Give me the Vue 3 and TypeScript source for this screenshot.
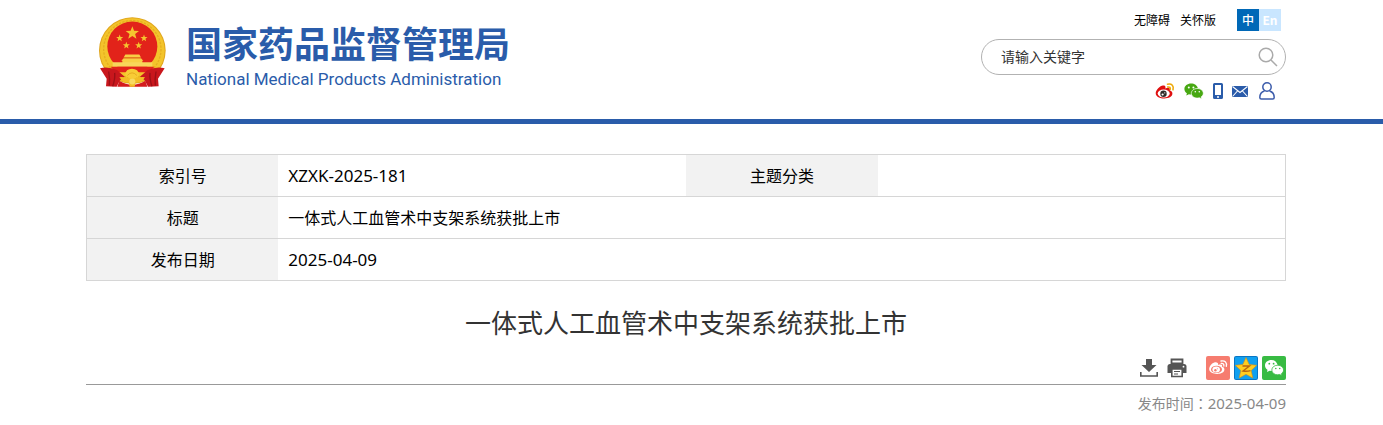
<script setup lang="ts">
import { ref } from 'vue'

interface Star { x: number; y: number; r: number }

const keyword = ref('')
const title = '一体式人工血管术中支架系统获批上市'
const published = '2025-04-09'

const stars: Star[] = [
  { x: 127, y: 73, r: 21 },
  { x: 89, y: 88, r: 11 },
  { x: 162, y: 88, r: 11 },
  { x: 109, y: 110, r: 11 },
  { x: 146, y: 110, r: 11 },
]

function starPoints({ x, y, r }: Star): string {
  return Array.from({ length: 10 }, (_, i) => {
    const radius = i % 2 ? r * 0.42 : r
    const angle = (Math.PI / 5) * i - Math.PI / 2
    return `${(x + radius * Math.cos(angle)).toFixed(1)},${(y + radius * Math.sin(angle)).toFixed(1)}`
  }).join(' ')
}
</script>

<template>
  <div class="page">
    <header class="header">
      <div class="container header-inner">
        <a class="brand" href="#">
          <svg class="emblem" viewBox="27 23 201 213" aria-hidden="true">
            <circle cx="127" cy="125" r="100" fill="#e0a51c" />
            <circle cx="127" cy="125" r="97" fill="#f3c42b" />
            <circle cx="127" cy="121" r="86" fill="none" stroke="#e6ae20" stroke-width="4" stroke-dasharray="7 4" />
            <circle cx="127" cy="113" r="75" fill="#e2231a" />
            <polygon v-for="star in stars" :key="`${star.x}-${star.y}`" :points="starPoints(star)" fill="#f5c52f" />
            <path d="M106 137h42l5 9H101z M101 148h52l7 8H94z M97 156h60v7H97z" fill="#f8cf45" />
            <path d="M68 160h119v14H68z" fill="#f8d65a" />
            <path d="M101 147h52" stroke="#d8850f" stroke-width="2" />
            <path d="M62 174h131l-14 16H77z" fill="#e2231a" />
            <path d="M30 178Q56 172 82 184L104 204 90 214 80 234 48 232 50 210Z" fill="#c9171d" />
            <path d="M224 178Q198 172 172 184L150 204 164 214 174 234 206 232 204 210Z" fill="#c9171d" />
            <path d="M56 188Q60 210 58 230M74 192Q76 210 68 232M198 188Q194 210 196 230M180 192Q178 210 186 232" fill="none" stroke="#9b1016" stroke-width="4" />
            <path d="M88 216Q127 240 166 216L172 234H82Z" fill="#d41c1d" />
            <path d="M105 198Q107 180 126 180T148 198Q140 210 127 210T105 198Z" fill="#f8cc35" />
            <path d="M112 200Q126 184 141 200" fill="none" stroke="#e09a18" stroke-width="2" />
            <path d="M88 205Q108 202 127 216 145 202 165 205L153 221 137 220 134 234H119L116 220 101 221Z" fill="#f3bd27" />
            <circle cx="127" cy="218" r="9" fill="#f9da62" />
          </svg>
          <span class="brand-text">
            <span class="brand-cn">国家药品监督管理局</span>
            <span class="brand-en">National Medical Products Administration</span>
          </span>
        </a>

        <div class="tools">
          <nav class="top-links">
            <a href="#">无障碍</a>
            <a href="#">关怀版</a>
            <span class="languages"><a class="lang current" href="#">中</a><a class="lang" href="#">En</a></span>
          </nav>

          <form class="search" @submit.prevent>
            <input v-model="keyword" class="search-input" type="text" placeholder="请输入关键字" aria-label="请输入关键字" />
            <button class="search-button" type="submit" aria-label="搜索">
              <svg viewBox="0 0 20 20" width="20" height="20" fill="none" stroke="#aaa" stroke-width="1.5">
                <circle cx="8" cy="8" r="6.8" /><path d="M13 13l6 6" />
              </svg>
            </button>
          </form>

          <nav class="channels">
            <a href="#" aria-label="微博">
              <svg viewBox="0 0 20 18" width="20" height="18">
                <path d="M8 3.5C5 3.6.7 8 .7 11.2c0 6.8 16.7 7.2 16.7.4 0-1.800-1.200-2.700-2.600-3 .8-2.700-1.200-3.400-4.500-2.100C10.900 4.300 10 3.300 8 3.500Z" fill="#df1010" />
                <ellipse cx="8.700" cy="11.500" rx="6" ry="4" fill="#fff" />
                <circle cx="8.500" cy="11.700" r="3.200" fill="#302b29" /><circle cx="7.600" cy="12.500" r="1.100" fill="#fff" /><circle cx="9.800" cy="10.800" r=".6" fill="#fff" />
                <path d="M12.500 2.200c4.500-1 6.500 1.800 5.500 5.500M12.700 5c2-.3 2.900.6 2.500 2.300" fill="none" stroke="#eeaa0b" stroke-width="1.600" stroke-linecap="round" />
              </svg>
            </a>
            <a href="#" aria-label="微信">
              <svg viewBox="0 0 20 18" width="20" height="18">
                <path d="M7.200 1.500C3.300 1.500.4 3.900.4 7c0 1.800 1 3.300 2.500 4.300L2.300 13.500l2.600-1.300c.8.2 1.600.3 2.500.3L13.800 6C13.200 3.400 10.500 1.500 7.200 1.500Z" fill="#47a812" />
                <path d="M13.300 6.500c-3.400 0-6 2.100-6 4.800s2.600 4.800 6 4.800c.8 0 1.500-.1 2.100-.3l2.300 1.100-.5-2c1.300-.9 2.100-2.100 2.100-3.600 0-2.700-2.600-4.800-6-4.800Z" fill="#47a812" stroke="#fff" stroke-width=".7" />
                <circle cx="4.800" cy="5.400" r="1" fill="#fff" /><circle cx="9.400" cy="5.400" r="1" fill="#fff" /><circle cx="11.300" cy="9.800" r=".8" fill="#fff" /><circle cx="15.300" cy="9.800" r=".8" fill="#fff" />
              </svg>
            </a>
            <a href="#" aria-label="手机版">
              <svg viewBox="0 0 10 18" width="10" height="18">
                <path fill-rule="evenodd" d="M1.500 1h7Q10 1 10 2.500v13Q10 17 8.500 17h-7Q0 17 0 15.500v-13Q0 1 1.500 1ZM2 3v10h6V3ZM4 14.200v1.500h2v-1.500Z" fill="#2a5caa" />
              </svg>
            </a>
            <a href="#" aria-label="邮箱">
              <svg viewBox="0 0 16 18" width="16" height="18">
                <path d="M0 4h16v11H0Z" fill="#2a5caa" />
                <path d="M.5 4.500L8 10.500l7.500-6M.5 14.500l5-5.500M15.500 14.500l-5-5.500" fill="none" stroke="#fff" stroke-width="1.100" />
              </svg>
            </a>
            <a class="account" href="#" aria-label="个人中心">
              <svg viewBox="0 0 16 18" width="16" height="18" fill="none" stroke="#3c5cab" stroke-width="1.500">
                <circle cx="8" cy="5" r="4.200" /><path d="M5.500 9C2.200 10 .8 12.500.8 15.500q0 1.500 1.500 1.500h11.400q1.500 0 1.500-1.500c0-3-1.400-5.500-4.700-6.500" />
              </svg>
            </a>
          </nav>
        </div>
      </div>
    </header>

    <main class="container">
      <table class="info">
        <tbody>
          <tr>
            <th scope="row">索引号</th>
            <td class="latin">XZXK-2025-181</td>
            <th scope="row">主题分类</th>
            <td></td>
          </tr>
          <tr>
            <th scope="row">标题</th>
            <td colspan="3">{{ title }}</td>
          </tr>
          <tr>
            <th scope="row">发布日期</th>
            <td class="latin" colspan="3">{{ published }}</td>
          </tr>
        </tbody>
      </table>

      <article>
        <h1 class="title">{{ title }}</h1>
        <div class="actions">
          <div class="file-actions">
            <button type="button" aria-label="下载">
              <svg viewBox="0 0 20 20" width="20" height="20" fill="#555">
                <path d="M7 1h6v6h4.500L10 14 2.500 7H7Z" /><path d="M1.800 14v4h16.400v-4" fill="none" stroke="#555" stroke-width="1.600" />
              </svg>
            </button>
            <button type="button" aria-label="打印">
              <svg viewBox="0 0 20 20" width="20" height="20">
                <path d="M4.500 1.500h11v4h-11Z" fill="#fff" stroke="#555" stroke-width="1.800" />
                <path d="M3 6h14q2.500 0 2.500 2.500V15H.5V8.500Q.5 6 3 6Z" fill="#555" />
                <path d="M4.800 11h10.400v7.500H4.800Z" fill="#fff" stroke="#555" stroke-width="1.600" />
                <path d="M7 13.500h6M7 16h4" stroke="#555" stroke-width="1.200" /><circle cx="16.500" cy="8.700" r=".9" fill="#fff" />
              </svg>
            </button>
          </div>
          <div class="share">
            <a href="#" aria-label="分享到微博">
              <svg viewBox="0 0 24 24" width="24" height="24">
                <rect width="24" height="24" rx="2" fill="#f67c6f" />
                <path d="M9.200 6.200C6.700 6.200 3.200 10 3.200 13c0 6.200 15.200 6.700 15.200.5 0-1.700-1.200-2.400-2.400-2.700.7-2.200-1-2.900-3.900-1.900.5-1.900-.7-2.800-2.900-2.700Z" fill="#fff" />
                <ellipse cx="10.500" cy="13.400" rx="5.500" ry="3.700" fill="#f67c6f" /><ellipse cx="10.200" cy="13.500" rx="3.800" ry="3" fill="#fff" />
                <circle cx="9.400" cy="14.200" r="1.200" fill="#f67c6f" /><circle cx="11.300" cy="12.800" r=".5" fill="#f67c6f" />
                <path d="M15 5c4-.9 6.200 1.700 5.300 5.300M15.200 7.500c2-.3 3 .7 2.600 2.500" fill="none" stroke="#fff" stroke-width="1.300" stroke-linecap="round" />
              </svg>
            </a>
            <a href="#" aria-label="分享到QQ空间">
              <svg viewBox="0 0 24 24" width="24" height="24">
                <rect width="24" height="24" rx="2" fill="#0876c4" /><rect x="1" y="1" width="22" height="22" rx="1" fill="#10a0f0" />
                <path d="M12 1.500l3.200 6.900 7.500.9-5.500 5.200 1.600 7.600-6.800-3.800-6.800 3.800 1.600-7.600L1.300 9.300l7.500-.9Z" fill="#ffce21" stroke="#d98b12" stroke-width=".6" />
                <path d="M8.500 10h7l-6.500 5q4 .7 7.500-.4" fill="none" stroke="#b96610" stroke-width="1.400" />
              </svg>
            </a>
            <a href="#" aria-label="分享到微信">
              <svg viewBox="0 0 24 24" width="24" height="24">
                <rect width="24" height="24" rx="2" fill="#38bb43" />
                <path d="M9.500 4C5.800 4 3 6.400 3 9.400c0 1.800 1 3.400 2.500 4.400L5 16l2.600-1.300 2.100.2 6-6C14.800 6 12.500 4 9.500 4Z" fill="#fff" />
                <path d="M15.700 9.200c-3.300 0-5.900 2.100-5.900 4.800s2.600 4.800 5.900 4.800l2-.3 2.300 1.200-.6-2c1.300-.9 2.200-2.200 2.200-3.700 0-2.700-2.600-4.800-5.900-4.800Z" fill="#fff" stroke="#38bb43" stroke-width=".8" />
                <circle cx="7.300" cy="7.700" r=".9" fill="#38bb43" /><circle cx="11.600" cy="7.700" r=".9" fill="#38bb43" /><circle cx="13.800" cy="12.500" r=".8" fill="#38bb43" /><circle cx="17.700" cy="12.500" r=".8" fill="#38bb43" />
              </svg>
            </a>
          </div>
        </div>
        <p class="published">发布时间<span class="colon" lang="zh-TW">：</span><time :datetime="published">{{ published }}</time></p>
      </article>
    </main>
  </div>
</template>

<style>
body {
  margin: 0;
  background: #fff;
}
</style>

<style scoped>
.page {
  box-sizing: border-box;
  padding-right: 11px;
  font-family: "Noto Sans CJK SC", sans-serif;
  font-size: 16px;
  color: #000;
  background: linear-gradient(#2a5caa, #2a5caa) 0 119px / 100% 5px no-repeat;
}
a {
  color: inherit;
  text-decoration: none;
}
svg {
  display: block;
}
button {
  padding: 0;
  border: 0;
  background: none;
  cursor: pointer;
}
.container {
  max-width: 1200px;
  margin: 0 auto;
}
.header-inner {
  display: flex;
  justify-content: space-between;
  box-sizing: border-box;
  height: 124px;
}
.brand {
  display: flex;
  align-items: flex-start;
  gap: 20px;
  padding: 16px 0 0 13px;
  color: #2a5caa;
}
.emblem {
  width: 67px;
  height: 72px;
}
.brand-text {
  display: flex;
  flex-direction: column;
}
.brand-cn {
  font-size: 36px;
  font-weight: 700;
  line-height: 53px;
}
.brand-en {
  font-family: Roboto, sans-serif;
  font-size: 17px;
  line-height: 20px;
}
.tools {
  width: 305px;
  padding-top: 9px;
}
.top-links {
  display: flex;
  justify-content: flex-end;
  gap: 10px;
  padding-right: 5px;
  font-size: 12px;
  line-height: 22px;
}
.languages {
  display: flex;
  margin-left: 11px;
}
.lang {
  width: 22px;
  height: 22px;
  text-align: center;
  font-weight: 700;
  color: #fff;
  background: #c9e6ff;
}
.lang.current {
  font-weight: 500;
  background: #0068b7;
}
.search {
  display: flex;
  align-items: center;
  box-sizing: border-box;
  height: 36px;
  margin-top: 8px;
  padding: 0 7px 0 19px;
  border: 1px solid #b2b2b2;
  border-radius: 18px;
}
.search-input {
  flex: 1;
  min-width: 0;
  padding: 0 0 2px;
  border: 0;
  outline: 0;
  font: inherit;
  font-size: 14px;
  color: #333;
  background: none;
}
.search-input::placeholder {
  color: #333;
  opacity: 1;
}
.channels {
  display: flex;
  justify-content: flex-end;
  gap: 9px;
  padding: 7px 11px 0 0;
}
.account {
  margin-left: 2px;
}
.info {
  width: 100%;
  margin-top: 30px;
  table-layout: fixed;
  border-collapse: collapse;
  border: 1px solid #d6d6d6;
}
.info tr {
  border-bottom: 1px solid #d6d6d6;
}
.info th,
.info td {
  box-sizing: border-box;
  height: 42px;
  padding: 0 10px 2px;
  font-weight: 400;
  line-height: 24px;
}
.info th {
  width: 16%;
  text-align: center;
  background: #f2f2f2;
}
.info .latin {
  padding-bottom: 0;
  font-family: "Noto Sans", sans-serif;
  font-size: 17px;
}
.title {
  margin: 21px 0 15px;
  font-size: 26px;
  font-weight: 400;
  line-height: 39px;
  text-align: center;
  color: #333;
}
.actions {
  display: flex;
  justify-content: flex-end;
  align-items: center;
  gap: 19px;
  padding-bottom: 4px;
  border-bottom: 1px solid #999;
}
.file-actions {
  display: flex;
  gap: 8px;
}
.share {
  display: flex;
  gap: 4px;
}
.published {
  margin: 6px 0;
  font-size: 14px;
  line-height: 24px;
  text-align: right;
  color: #888;
}
.colon {
  font-family: "Noto Sans CJK TC", sans-serif;
}
.published time {
  font-family: "Noto Sans", sans-serif;
  font-size: 15px;
}
</style>
